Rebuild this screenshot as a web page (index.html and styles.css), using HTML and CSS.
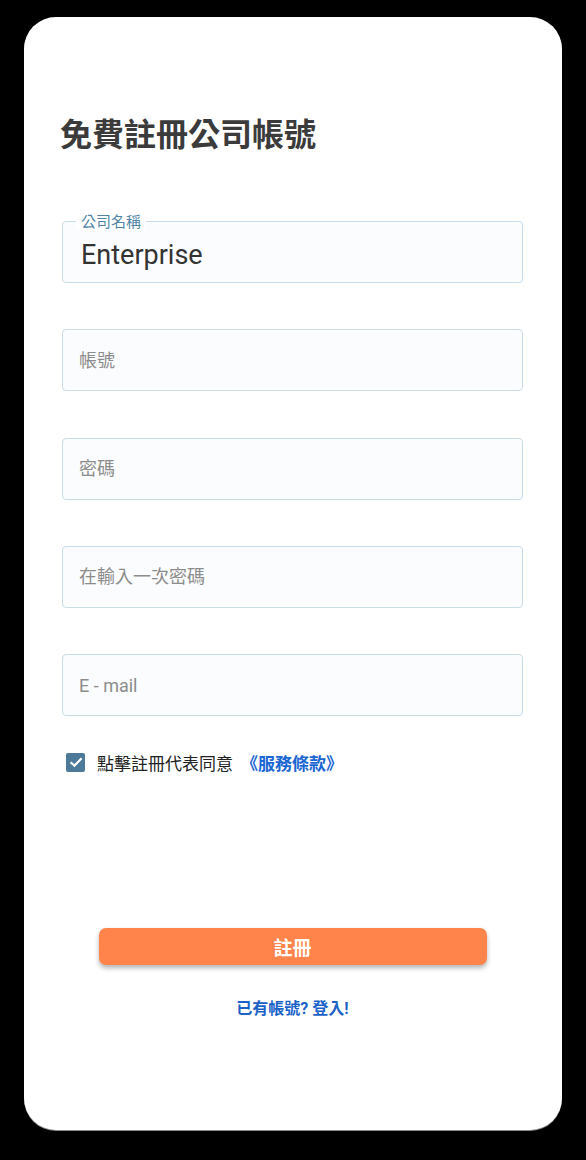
FILE: index.html
```html
<!DOCTYPE html>
<html lang="zh-Hant">

<head>
    <meta charset="UTF-8">
    <meta name="viewport" content="width=device-width, initial-scale=1.0">
    <title>免費註冊公司帳號</title>
    <link rel="stylesheet" href="styles.css">
</head>

<body>
<div class="screen">
    <div class="card">
        <h1 class="title">免費註冊公司帳號</h1>

        <form class="signup-form">
            <div class="field field-filled">
                <label for="company" class="field-label">公司名稱</label>
                <input type="text" id="company" value="Enterprise">
            </div>

            <div class="field">
                <input type="text" id="account" placeholder="帳號">
            </div>

            <div class="field">
                <input type="password" id="password" placeholder="密碼">
            </div>

            <div class="field">
                <input type="password" id="password2" placeholder="在輸入一次密碼">
            </div>

            <div class="field">
                <input type="email" id="email" placeholder="E - mail">
            </div>

            <div class="agree-row">
                <span class="check-box">
                    <svg width="16" height="16" viewBox="0 0 16 16">
                        <path d="M2.6 8.2 L6.4 11.8 L13.6 4.2" fill="none" stroke="#fff" stroke-width="2.2"/>
                    </svg>
                </span>
                <span class="agree-text">點擊註冊代表同意</span>
                <a href="#" class="terms-link">《服務條款》</a>
            </div>
        </form>

        <div class="actions">
            <button type="button" class="btn-register">註冊</button>
            <a href="#" class="login-link">已有帳號? 登入!</a>
        </div>
    </div>
</div>
</body>

</html>
```

FILE: styles.css
```css
/* bố cục chung */
body {
    margin: 0;
    padding: 0;
    background-color: #000;
    font-family: Roboto, "Noto Sans CJK TC", sans-serif;
}

.screen {
    padding: 17px 24px 30px 24px;
}

.card {
    background-color: #fff;
    border-radius: 32px;
    height: 1113px;
    padding: 95px 39px 0 38px;
    box-sizing: border-box;
    box-shadow: 0 1px 0 #8a8a8a;
}

.title {
    margin: 0 0 0 -2px;
    font-family: "Noto Sans CJK TC", sans-serif;
    font-size: 32px;
    line-height: 40px;
    font-weight: 700;
    color: #3b3b3b;
}

.signup-form {
    margin-top: 69px;
}

.field {
    position: relative;
    margin-bottom: 46.3px;
}

.field input {
    display: block;
    width: 100%;
    height: 62px;
    box-sizing: border-box;
    padding: 0 16px;
    border: 1px solid #c9dde8;
    border-radius: 4px;
    background-color: #fbfcfd;
    font-family: Roboto, "Noto Sans CJK TC", sans-serif;
    font-size: 18px;
    color: #333;
    outline: none;
}

.field input::placeholder {
    color: #8c8c8c;
}

.field-filled input {
    padding: 5px 18px 0 18px;
    font-size: 27px;
    color: #333;
}

.field-label {
    position: absolute;
    top: -9px;
    left: 14px;
    padding: 0 5px;
    background-color: #fff;
    font-family: "Noto Sans CJK TC", sans-serif;
    font-size: 15px;
    line-height: 18px;
    color: #4f84a6;
}

.agree-row {
    display: flex;
    align-items: center;
    margin-top: -12px;
    padding-left: 4px;
    height: 24px;
}

.check-box {
    display: flex;
    align-items: center;
    justify-content: center;
    flex-shrink: 0;
    width: 19px;
    height: 19px;
    border-radius: 2px;
    background-color: #4c7a98;
    margin-right: 12px;
}

.agree-text {
    font-family: "Noto Sans CJK TC", sans-serif;
    font-size: 17px;
    color: #222;
}

.terms-link {
    margin-left: 8px;
    font-family: "Noto Sans CJK TC", sans-serif;
    font-size: 17px;
    font-weight: 700;
    color: #1a66d2;
    text-decoration: none;
}

.actions {
    display: flex;
    flex-direction: column;
    align-items: center;
    margin-top: 154px;
}

.btn-register {
    width: 388px;
    height: 37px;
    border: none;
    border-radius: 7px;
    background-color: #fe844b;
    color: #fff;
    font-family: "Noto Sans CJK TC", sans-serif;
    font-size: 19px;
    font-weight: 700;
    box-shadow: 0 3px 5px rgba(0, 0, 0, 0.3);
    cursor: pointer;
}

.login-link {
    margin-top: 30px;
    font-family: Roboto, "Noto Sans CJK TC", sans-serif;
    font-size: 16px;
    font-weight: 700;
    color: #1a62c8;
    text-decoration: none;
}
```
